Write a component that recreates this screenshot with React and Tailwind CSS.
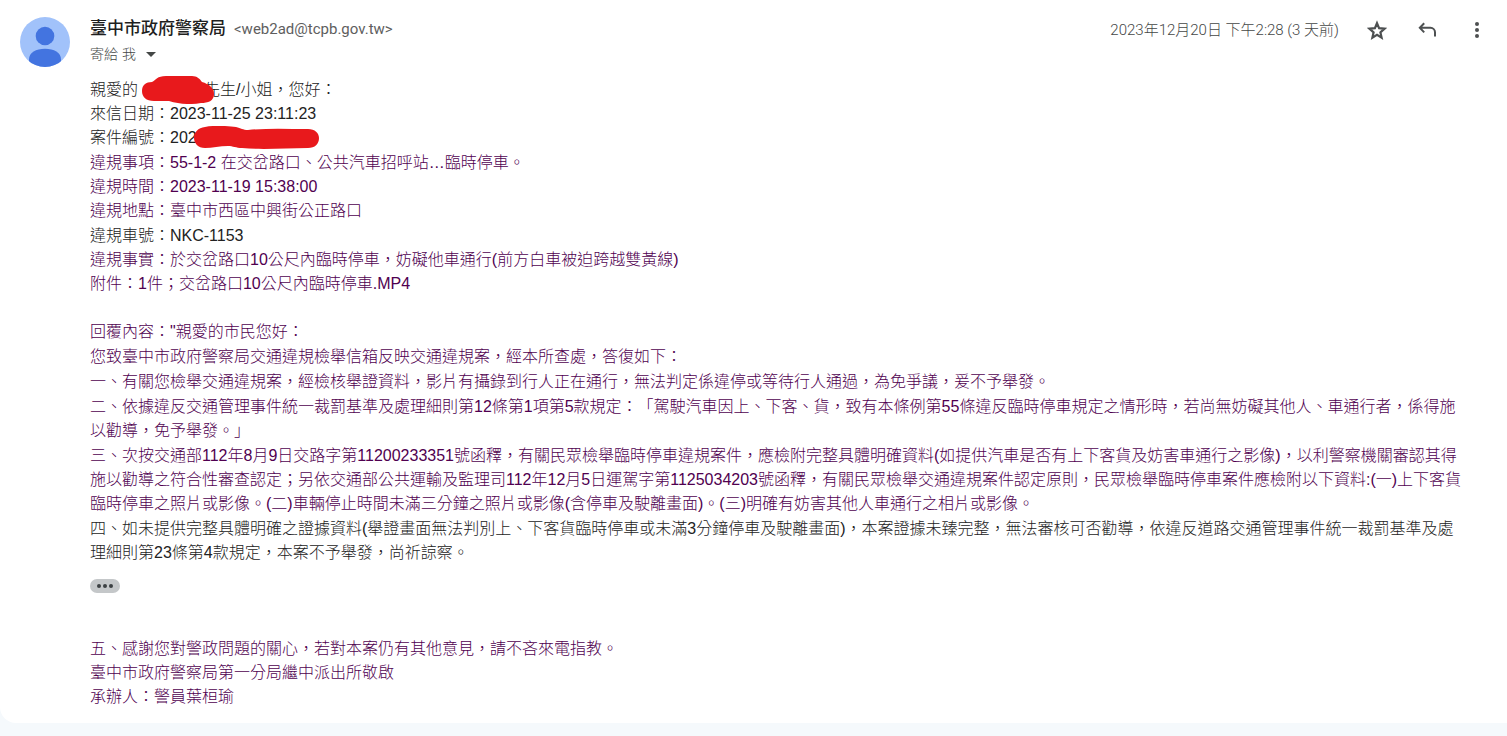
const purple = "text-[#500050]";

const Redaction = ({ className, viewBox, d }) => (
  <svg className={`absolute z-10 max-w-none ${className}`} viewBox={viewBox} aria-hidden="true">
    <path d={d} fill="#e8191c" />
  </svg>
);

const Avatar = () => (
  <svg className="h-[50px] w-[50px] shrink-0" viewBox="0 0 50 50" aria-hidden="true">
    <defs>
      <clipPath id="avatar-clip">
        <circle cx="25" cy="25" r="25" />
      </clipPath>
    </defs>
    <g clipPath="url(#avatar-clip)">
      <rect width="50" height="50" fill="#a1c2fa" />
      <circle cx="25" cy="19" r="9.3" fill="#4374e0" />
      <path d="M9 50v-7.500c0-7 7-10.700 16-10.700s16 3.700 16 10.700V50z" fill="#4374e0" />
    </g>
  </svg>
);

const StarIcon = () => (
  <svg className="h-5 w-5" viewBox="0 0 20 20" aria-hidden="true">
    <path
      d="M10 3.200l2.100 5 5.400.5-4.100 3.600 1.200 5.300-4.600-2.800-4.600 2.800 1.200-5.300-4.100-3.600 5.400-.5z"
      fill="none"
      stroke="#4d5051"
      strokeWidth="2.200"
    />
  </svg>
);

const ReplyIcon = () => (
  <svg className="h-5 w-5" viewBox="0 0 20 20" fill="none" stroke="#4d5051" strokeWidth="2" aria-hidden="true">
    <path d="M7.200 3.200L2.800 7.800l4.400 4.600M2.800 7.800h10.700a4.500 4.500 0 0 1 4.500 4.500v4.200" />
  </svg>
);

const MoreIcon = () => (
  <svg className="h-5 w-5" viewBox="0 0 20 20" fill="#4d5051" aria-hidden="true">
    <circle cx="10" cy="4" r="2" />
    <circle cx="10" cy="10" r="2" />
    <circle cx="10" cy="16" r="2" />
  </svg>
);

const MessageHeader = () => (
  <header className="flex min-w-0 grow items-start justify-between">
    <div>
      <div className="flex h-6 items-center gap-2 leading-6">
        <h1 className="text-[17px] font-medium text-[#1f1f1f]">臺中市政府警察局</h1>
        <span className="font-[Roboto,'Noto_Sans_CJK_TC',sans-serif] text-[15px] text-[#5e5e5e]">&lt;web2ad@tcpb.gov.tw&gt;</span>
      </div>
      <button type="button" className="flex h-[26px] items-center gap-2.5 text-sm font-light text-[#444746]">
        寄給 我
        <svg className="h-[5px] w-[10px]" viewBox="0 0 10 5" aria-hidden="true">
          <path d="M0 0h10L5 5z" fill="#444746" />
        </svg>
      </button>
    </div>
    <div className="flex h-[26px] items-center">
      <time className="font-[Roboto,'Noto_Sans_CJK_TC',sans-serif] text-[15px] font-light text-[#444746]">
        2023年12月20日 下午2:28 (3 天前)
      </time>
      <div className="ml-7 flex items-center gap-[30px]">
        <button type="button" aria-label="加星號"><StarIcon /></button>
        <button type="button" aria-label="回覆"><ReplyIcon /></button>
        <button type="button" aria-label="更多"><MoreIcon /></button>
      </div>
    </div>
  </header>
);

const CaseInfo = () => (
  <section className="space-y-px">
    <div>
      <p>
        親愛的
        <span className="relative inline-block h-3 w-[66px]">
          <Redaction
            className="-top-[7px] left-[4px] h-[28px] w-[72px]"
            viewBox="0 0 72 28"
            d="M10 6C14 4 15 0 24 0h26c5 0 8 3 10 6 7 2 12 6 12 12 0 7-6 9-13 9-11 2-22 1-32-2H12C4 25 0 21 0 15S4 6 10 6z"
          />
        </span>
        先生/小姐，您好：
      </p>
      <p>來信日期：2023-11-25 23:11:23</p>
      <p>
        案件編號：202
        <span className="relative inline-block h-3 w-[120px]">
          <Redaction
            className="-top-[5px] -left-[3px] h-[23px] w-[125px]"
            viewBox="0 0 125 23"
            d="M11 1C20-1 35 0 42 1c5 1 7 3 12 3 20-2 40-1 60-1 7 0 11 4 11 9 0 6-4 10-11 10-22 0-45 2-66 0-6 0-9-2-14-2-8 0-16 2-23 2C4 22 0 17 0 12 0 6 4 2 11 1z"
          />
        </span>
      </p>
    </div>
    <div className={purple}>
      <p>違規事項：55-1-2 在交岔路口、公共汽車招呼站…臨時停車。</p>
      <p>違規時間：2023-11-19 15:38:00</p>
      <p>違規地點：臺中市西區中興街公正路口</p>
    </div>
    <div>
      <p>違規車號：NKC-1153</p>
      <p className={purple}>違規事實：於交岔路口10公尺內臨時停車，妨礙他車通行(前方白車被迫跨越雙黃線)</p>
      <p className={purple}>附件：1件；交岔路口10公尺內臨時停車.MP4</p>
    </div>
  </section>
);

const Reply = () => (
  <section className={`mt-6 space-y-px ${purple}`}>
    <p>回覆內容："親愛的市民您好：</p>
    <p>您致臺中市政府警察局交通違規檢舉信箱反映交通違規案，經本所查處，答復如下：</p>
    <p>一、有關您檢舉交通違規案，經檢核舉證資料，影片有攝錄到行人正在通行，無法判定係違停或等待行人通過，為免爭議，爰不予舉發。</p>
    <p>二、依據違反交通管理事件統一裁罰基準及處理細則第12條第1項第5款規定：「駕駛汽車因上、下客、貨，致有本條例第55條違反臨時停車規定之情形時，若尚無妨礙其他人、車通行者，係得施以勸導，免予舉發。」</p>
    <p>三、次按交通部112年8月9日交路字第11200233351號函釋，有關民眾檢舉臨時停車違規案件，應檢附完整具體明確資料(如提供汽車是否有上下客貨及妨害車通行之影像)，以利警察機關審認其得施以勸導之符合性審查認定；另依交通部公共運輸及監理司112年12月5日運駕字第1125034203號函釋，有關民眾檢舉交通違規案件認定原則，民眾檢舉臨時停車案件應檢附以下資料:(一)上下客貨臨時停車之照片或影像。(二)車輛停止時間未滿三分鐘之照片或影像(含停車及駛離畫面)。(三)明確有妨害其他人車通行之相片或影像。</p>
    <p className="text-[#222222]">四、如未提供完整具體明確之證據資料(舉證畫面無法判別上、下客貨臨時停車或未滿3分鐘停車及駛離畫面)，本案證據未臻完整，無法審核可否勸導，依違反道路交通管理事件統一裁罰基準及處理細則第23條第4款規定，本案不予舉發，尚祈諒察。</p>
  </section>
);

const App = () => {
  return (
    <div lang="zh-TW" className="min-h-screen bg-[#f5f9fc] font-['Liberation_Sans','Noto_Sans_CJK_TC',sans-serif] [text-spacing-trim:space-all]">
      <main className="rounded-bl-2xl bg-white pt-[17px] pr-5 pb-3.5 pl-5">
        <div className="flex h-[61px] gap-5">
          <Avatar />
          <MessageHeader />
        </div>
        <article className="pr-5 pl-[70px] text-base leading-6 font-light text-[#222222]">
          <CaseInfo />
          <Reply />
          <button
            type="button"
            aria-label="顯示經過修剪的內容"
            className="mt-[14px] flex h-[14px] w-[30px] items-center justify-center gap-[2px] rounded-full bg-[#c4c7c9]"
          >
            <span className="h-1 w-1 rounded-full bg-[#3c4043]" />
            <span className="h-1 w-1 rounded-full bg-[#3c4043]" />
            <span className="h-1 w-1 rounded-full bg-[#3c4043]" />
          </button>
          <footer className={`mt-11 ${purple}`}>
            <p>五、感謝您對警政問題的關心，若對本案仍有其他意見，請不吝來電指教。</p>
            <p>臺中市政府警察局第一分局繼中派出所敬啟</p>
            <p>承辦人：警員葉桓瑜</p>
          </footer>
        </article>
      </main>
    </div>
  );
};

export default App;
